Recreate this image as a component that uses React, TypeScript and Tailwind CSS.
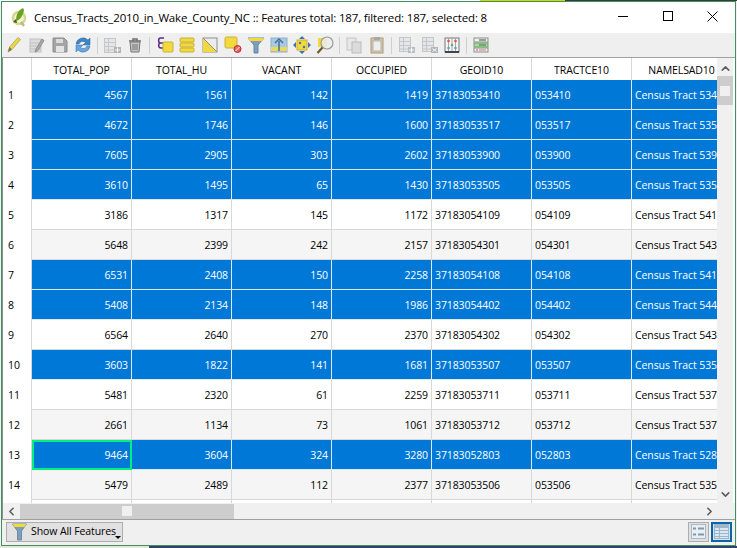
import { ReactNode } from "react";
import { ChevronUp, ChevronDown, ChevronLeft, ChevronRight } from "lucide-react";

const columns = ["TOTAL_POP", "TOTAL_HU", "VACANT", "OCCUPIED", "GEOID10", "TRACTCE10", "NAMELSAD10"];

const rows = [
  ["4567", "1561", "142", "1419", "37183053410", "053410", "Census Tract 534", true],
  ["4672", "1746", "146", "1600", "37183053517", "053517", "Census Tract 535", true],
  ["7605", "2905", "303", "2602", "37183053900", "053900", "Census Tract 539", true],
  ["3610", "1495", "65", "1430", "37183053505", "053505", "Census Tract 535", true],
  ["3186", "1317", "145", "1172", "37183054109", "054109", "Census Tract 541", false],
  ["5648", "2399", "242", "2157", "37183054301", "054301", "Census Tract 543", false],
  ["6531", "2408", "150", "2258", "37183054108", "054108", "Census Tract 541", true],
  ["5408", "2134", "148", "1986", "37183054402", "054402", "Census Tract 544", true],
  ["6564", "2640", "270", "2370", "37183054302", "054302", "Census Tract 543", false],
  ["3603", "1822", "141", "1681", "37183053507", "053507", "Census Tract 535", true],
  ["5481", "2320", "61", "2259", "37183053711", "053711", "Census Tract 537", false],
  ["2661", "1134", "73", "1061", "37183053712", "053712", "Census Tract 537", false],
  ["9464", "3604", "324", "3280", "37183052803", "052803", "Census Tract 528", true],
  ["5479", "2489", "112", "2377", "37183053506", "053506", "Census Tract 535", false],
  ["", "", "", "", "", "", "", false],
] as (string | boolean)[][];

function Icon({ children, faded }: { children: ReactNode; faded?: boolean }) {
  return (
    <svg width="20" height="20" viewBox="0 0 20 20" className={faded ? "shrink-0 opacity-60" : "shrink-0"}>
      {children}
    </svg>
  );
}

function Sep() {
  return <div className="w-px h-[17px] bg-[#d0d0d0] mx-[1px] shrink-0" />;
}

function TableGlyph({ x = 3, y = 3 }: { x?: number; y?: number }) {
  return (
    <g transform={`translate(${x} ${y})`} fill="none" stroke="#a9adb0">
      <rect x="0.5" y="0.5" width="11" height="14" fill="#dfe1e2" />
      <path d="M0.5 4.5h11M0.5 8.5h11M0.5 12h11M4.5 0.5v14" />
    </g>
  );
}

function Toolbar() {
  return (
    <div className="flex items-center h-[24px] bg-[#efefef] pl-[2px] gap-[3px] shrink-0">
      {/* toggle editing */}
      <Icon>
        <path d="M4 17l1.500-5L14 2.500l2.500 2L8 14.500z" fill="#e8d44d" stroke="#b5a63f" strokeWidth="0.800" />
        <path d="M4 17l1.500-5 2.500 2.500z" fill="#77755f" />
      </Icon>
      {/* multi edit, save */}
      <Icon>
        <rect x="3" y="4" width="11" height="13" fill="#dcdcdc" stroke="#c2c2c2" />
        <path d="M3 8h11M3 11h11M3 14h11" stroke="#c2c2c2" />
        <path d="M8 17l1-3 6-10 2 1.500-6 10z" fill="#a9a9a9" stroke="#919191" />
      </Icon>
      <Icon>
        <path d="M3 3h11l3 3v11H3z" fill="#a5a5a5" stroke="#8c8c8c" />
        <rect x="6" y="4" width="7" height="4" fill="#dcdcdc" />
        <rect x="6" y="11" width="8" height="6" fill="#e4e4e4" />
      </Icon>
      <Icon>
        <path d="M3 9a7 7 0 0 1 12-4l2-2v7h-7l2.500-2.500A4 4 0 0 0 6 9z" fill="#3f84c5" stroke="#2f6aa5" strokeWidth="0.5" />
        <path d="M17 11a7 7 0 0 1-12 4l-2 2v-7h7l-2.500 2.500A4 4 0 0 0 14 11z" fill="#6aa5dc" stroke="#2f6aa5" strokeWidth="0.5" />
      </Icon>
      <Sep />
      {/* new field, delete field */}
      <Icon faded>
        <TableGlyph x={2} y={3} />
        <rect x="12" y="12" width="7" height="6" fill="#8a8f92" />
        <path d="M15.500 12.500v5M13 15h5" stroke="#fff" />
      </Icon>
      <Icon>
        <path d="M4 6h12M8 6V4h4v2" fill="none" stroke="#6f6f6f" strokeWidth="1.500" />
        <path d="M5 7h10l-1 10H6z" fill="#c4c4c4" stroke="#777" />
        <path d="M8 9v6M10 9v6M12 9v6" stroke="#777" />
      </Icon>
      <Sep />
      {/* selection tools */}
      <Icon>
        <path d="M10 3H6.500C4 3 4 8 6.500 8 4 8 4 13 7 13h3M5 8h5" fill="none" stroke="#5a2d82" strokeWidth="1.500" />
        <rect x="9" y="7" width="10" height="10" rx="1" fill="#f2d93f" stroke="#c9b030" />
      </Icon>
      <Icon>
        <rect x="3" y="3" width="14" height="4" rx="1" fill="#f2d93f" stroke="#c9b030" />
        <rect x="3" y="8" width="14" height="4" rx="1" fill="#f2d93f" stroke="#c9b030" />
        <rect x="3" y="13" width="14" height="4" rx="1" fill="#f2d93f" stroke="#c9b030" />
      </Icon>
      <Icon>
        <rect x="3" y="3" width="14" height="14" fill="#ececec" stroke="#8f8f8f" />
        <path d="M3 3v14h14z" fill="#f2d93f" />
        <path d="M3 3l14 14" stroke="#8f8f8f" />
      </Icon>
      <Icon>
        <rect x="2" y="2" width="12" height="11" rx="1.500" fill="#f2d93f" stroke="#c9b030" />
        <circle cx="14.500" cy="14" r="3.500" fill="#e06666" stroke="#c62828" />
        <path d="M12.500 16l4-4" stroke="#fff" />
      </Icon>
      {/* filter, move to top, pan, zoom */}
      <Icon>
        <path d="M2 3h16l-6 7v8H8v-8z" fill="#7f9fb8" stroke="#638aa8" />
        <path d="M2 3h16l-2 3H4z" fill="#f2d93f" />
      </Icon>
      <Icon>
        <rect x="2" y="3" width="16" height="14" fill="#a9c8e4" stroke="#8fb0cf" />
        <rect x="2" y="12" width="16" height="4" fill="#efd94f" />
        <path d="M10 16V6M6 8l4-4 4 4" fill="none" stroke="#3f6f96" strokeWidth="1.500" />
      </Icon>
      <Icon>
        <rect x="5" y="5" width="10" height="10" fill="#f2d93f" stroke="#c9b030" />
        <path d="M10 1l3 3H7zM10 19l3-3H7zM1 10l3-3v6zM19 10l-3-3v6z" fill="#3f74a8" />
        <circle cx="8" cy="8" r="1.200" fill="#3f74a8" />
        <circle cx="12" cy="12" r="1.200" fill="#3f74a8" />
      </Icon>
      <Icon>
        <rect x="3" y="3" width="9" height="9" fill="#f2d93f" />
        <circle cx="12" cy="8" r="6" fill="#e8eef0" fillOpacity="0.8" stroke="#9a9a9a" strokeWidth="1.200" />
        <path d="M7.500 12.500L2.500 18" stroke="#6b5a2a" strokeWidth="2.200" />
      </Icon>
      <Sep />
      {/* copy, paste */}
      <Icon faded>
        <rect x="3" y="3" width="9" height="12" fill="#e2e2e2" stroke="#a9a9a9" />
        <rect x="8" y="7" width="9" height="11" fill="#cfcfcf" stroke="#9a9a9a" />
      </Icon>
      <Icon>
        <rect x="4" y="3" width="12" height="15" fill="#d8c7a8" stroke="#b09a76" />
        <rect x="6" y="6" width="8" height="10" fill="#eeeeee" stroke="#b3b3b3" />
        <rect x="7" y="2" width="6" height="3" fill="#a7a7a7" />
      </Icon>
      <Sep />
      {/* organize, form, calculator */}
      <Icon faded>
        <TableGlyph x={3} y={2} />
        <rect x="12" y="12" width="7" height="6" fill="#9a9fa2" />
        <path d="M15.500 12.500v5M13 15h5" stroke="#fff" />
      </Icon>
      <Icon faded>
        <TableGlyph x={3} y={2} />
        <rect x="12" y="12" width="7" height="6" fill="#8a8f92" />
        <path d="M13.500 13.500l4 3M17.500 13.500l-4 3" stroke="#fff" />
      </Icon>
      <Icon>
        <rect x="3" y="3" width="14" height="14" fill="#f4f4f4" stroke="#777" />
        <path d="M3 17h14" stroke="#444" strokeWidth="2" />
        <path d="M6.500 3v13M10 3v13M13.500 3v13" stroke="#a5a5a5" />
        <circle cx="6.500" cy="6" r="1.300" fill="#d9534f" />
        <circle cx="13.500" cy="6" r="1.300" fill="#d9534f" />
        <circle cx="10" cy="10" r="1.300" fill="#5cb85c" />
        <circle cx="6.500" cy="13" r="1.300" fill="#5b9bd5" />
        <circle cx="13.500" cy="13" r="1.300" fill="#5b9bd5" />
      </Icon>
      <Sep />
      {/* conditional formatting */}
      <Icon>
        <rect x="3" y="3" width="14" height="4" fill="#f1f1f1" stroke="#8d8d8d" />
        <rect x="3" y="8" width="14" height="4" fill="#a8d8a0" stroke="#6aa564" />
        <rect x="3" y="13" width="14" height="4" fill="#f1f1f1" stroke="#8d8d8d" />
        <path d="M8 5h7" stroke="#444" />
        <path d="M8 10h7" stroke="#3b7a34" />
        <path d="M5 15h2" stroke="#d9534f" />
        <path d="M8 15h7" stroke="#c77" />
      </Icon>
    </div>
  );
}

function Table() {
  return (
    <div className="h-[445px] flex border-l border-[#8f8f8f] bg-white shrink-0">
      <div className="w-[714px] flex flex-col overflow-hidden">
        <div className="h-[22px] flex shrink-0">
          <div className="w-[29px] shrink-0 border-r border-[#d8d8d8]" />
          {columns.map((c) => (
            <div key={c} className="w-[100px] shrink-0 border-r border-[#d8d8d8] text-center text-black leading-[25px]">
              {c}
            </div>
          ))}
        </div>
        {rows.map((row, i) => {
          const selected = row[7] === true;
          const current = i === 12;
          return (
            <div key={i} className="h-[30px] flex shrink-0 leading-[31px]">
              <div className="w-[29px] shrink-0 bg-white border-r border-[#d8d8d8] pl-[5px] text-black">
                {row[0] ? i + 1 : ""}
              </div>
              {row.slice(0, 7).map((v, j) => (
                <div
                  key={j}
                  className={`w-[100px] shrink-0 whitespace-nowrap overflow-hidden border-r border-b ${j < 4 ? "text-right pr-[3px]" : "text-left pl-[3px]"} ${
                    selected
                      ? "bg-[#0078d7] text-white border-[#dfe9f2]"
                      : i % 2 === 1
                        ? "bg-[#f5f5f5] text-black border-[#d8d8d8]"
                        : "bg-white text-black border-[#d8d8d8]"
                  } ${current && j === 0 ? "outline-2 -outline-offset-2 outline-[#00f080]" : ""}`}
                >
                  {v as string}
                </div>
              ))}
            </div>
          );
        })}
      </div>
      <div className="w-[16px] bg-[#f0f0f0] flex flex-col items-center shrink-0">
        <div className="h-[18px] pt-[2px] flex items-center justify-center">
          <ChevronUp size={13} strokeWidth={3} className="text-[#606060]" />
        </div>
        <div className="w-full h-[29px] bg-[#cdcdcd] flex items-center justify-center">
          <div className="w-[10px] h-[10px] bg-[#f0f0f0]" />
        </div>
        <div className="flex-1" />
        <div className="h-[17px] flex items-center justify-center">
          <ChevronDown size={13} strokeWidth={3} className="text-[#606060]" />
        </div>
      </div>
    </div>
  );
}

function HScroll() {
  return (
    <div className="h-[16px] flex items-center bg-[#f0f0f0] border-l border-[#8f8f8f] shrink-0">
      <div className="w-[17px] flex justify-center shrink-0">
        <ChevronLeft size={13} strokeWidth={3} className="text-[#606060]" />
      </div>
      <div className="w-[214px] h-[15px] bg-[#cdcdcd] flex items-center justify-center shrink-0">
        <div className="w-[10px] h-[10px] bg-[#f0f0f0]" />
      </div>
      <div className="flex-1" />
      <div className="w-[17px] flex justify-center shrink-0 mr-[17px]">
        <ChevronRight size={13} strokeWidth={3} className="text-[#606060]" />
      </div>
    </div>
  );
}

function BottomBar() {
  return (
    <div className="flex-1 flex items-center justify-between bg-[#f0f0f0] border-t border-[#a0a0a0] pl-[4px] pr-[3px] pb-[2px]">
      <div className="relative h-[20px] w-[117px] flex items-center gap-[3px] pl-[4px] bg-[#e1e1e1] border border-[#adadad] text-black">
        <svg width="17" height="18" viewBox="0 0 16 18" className="shrink-0">
          <path d="M1 1h14l-5 7v9H6V8z" fill="#7f9fb8" stroke="#6a8ca8" />
          <path d="M1 1h14l-2 3H3z" fill="#f2d93f" />
        </svg>
        <span className="whitespace-nowrap">Show All Features</span>
        <div className="absolute right-[1px] bottom-[2px] w-0 h-0 border-l-[3px] border-r-[3px] border-t-[3px] border-l-transparent border-r-transparent border-t-black" />
      </div>
      <div className="flex gap-[2px]">
        <div className="w-[21px] h-[20px] bg-[#e1e1e1] border border-[#adadad] flex items-center justify-center">
          <svg width="15" height="15" viewBox="0 0 15 15">
            <rect x="0.500" y="0.500" width="14" height="14" fill="#e8eef3" stroke="#a9bac7" />
            <path d="M2 4.500h3M2 10.500h3M7 4.500h6M7 10.500h6" stroke="#8297a8" strokeWidth="2" />
          </svg>
        </div>
        <div className="w-[21px] h-[20px] bg-[#cce4f7] border-2 border-[#0f63a8] flex items-center justify-center">
          <svg width="15" height="15" viewBox="0 0 15 15">
            <rect x="0.500" y="0.500" width="14" height="14" fill="#dbe7f1" stroke="#9fb6c9" />
            <rect x="1" y="1" width="13" height="3" fill="#9fb6c9" />
            <path d="M1 6.500h13M1 9.500h13M1 12.500h13M5.500 4v10" stroke="#9fb6c9" />
          </svg>
        </div>
      </div>
    </div>
  );
}

export default function App() {
  return (
    <div className="w-[737px] h-[548px] overflow-hidden bg-[#f3f3f3] flex flex-col text-[10.5px] tracking-[-0.1px] font-['Open_Sans','Liberation_Sans',sans-serif]">
      <div className="h-px flex shrink-0">
        <div className="w-[480px] bg-white" />
        <div className="w-[85px] bg-[#d6d600]" />
        <div className="flex-1 bg-[#3a3a3a]" />
      </div>
      <div className="h-[545px] w-[735px] ml-px flex flex-col border border-[#3f8f63] bg-white shrink-0">
        <div className="h-[31px] flex items-center bg-white shrink-0">
          <svg width="20" height="20" viewBox="0 0 20 20" className="ml-[7px] mb-[1px] shrink-0">
            <circle cx="10" cy="11" r="6" fill="#f4f5dc" stroke="#d3d88e" strokeWidth="2.500" />
            <path d="M12 15l3 4" stroke="#b8bd7a" strokeWidth="2.500" />
            <path d="M14 1C9 3 7 8 7 14c4-1 7-5 8-11z" fill="#6ea121" />
            <path d="M7 12l-3 3 4 1z" fill="#3f5a12" />
          </svg>
          <div className="ml-[5px] text-[11.5px] tracking-[-0.15px] text-black whitespace-nowrap flex-1">
            Census_Tracts_2010_in_Wake_County_NC :: Features total: 187, filtered: 187, selected: 8
          </div>
          <div className="flex items-center text-black pb-[3px]">
            <div className="w-[45px] flex items-center justify-center">
              <svg width="10" height="10" viewBox="0 0 10 10">
                <path d="M0 5.500h10" stroke="#000" />
              </svg>
            </div>
            <div className="w-[45px] flex items-center justify-center">
              <svg width="10" height="10" viewBox="0 0 10 10">
                <rect x="0.500" y="0.500" width="9" height="9" fill="none" stroke="#000" />
              </svg>
            </div>
            <div className="w-[45px] flex items-center justify-center">
              <svg width="11" height="11" viewBox="0 0 11 11">
                <path d="M0.500 0.500l10 10M10.500 0.500l-10 10" stroke="#000" />
              </svg>
            </div>
          </div>
        </div>
        <Toolbar />
        <div className="h-px bg-[#a0a0a0] shrink-0" />
        <Table />
        <HScroll />
        <BottomBar />
      </div>
      <div className="flex-1 flex">
        <div className="w-[149px] bg-[#e6e6da]" />
        <div className="flex-1 bg-[#33406a]" />
      </div>
    </div>
  );
}
